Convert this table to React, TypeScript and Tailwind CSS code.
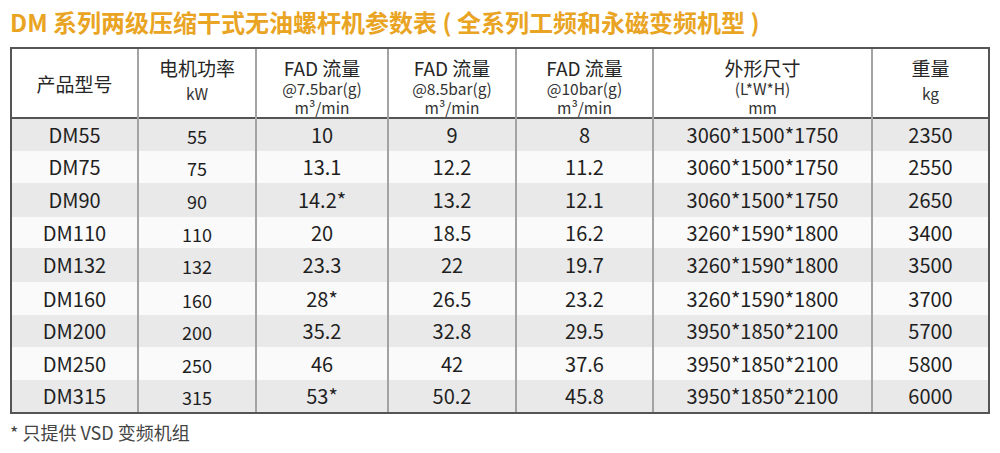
const rows = [
  ['DM55', '55', '10', '9', '8', '3060*1500*1750', '2350'],
  ['DM75', '75', '13.1', '12.2', '11.2', '3060*1500*1750', '2550'],
  ['DM90', '90', '14.2*', '13.2', '12.1', '3060*1500*1750', '2650'],
  ['DM110', '110', '20', '18.5', '16.2', '3260*1590*1800', '3400'],
  ['DM132', '132', '23.3', '22', '19.7', '3260*1590*1800', '3500'],
  ['DM160', '160', '28*', '26.5', '23.2', '3260*1590*1800', '3700'],
  ['DM200', '200', '35.2', '32.8', '29.5', '3950*1850*2100', '5700'],
  ['DM250', '250', '46', '42', '37.6', '3950*1850*2100', '5800'],
  ['DM315', '315', '53*', '50.2', '45.8', '3950*1850*2100', '6000'],
];

// row heights measured from the sheet
const heights = ['h-[33px]', 'h-[32px]', 'h-[34px]', 'h-[31px]', 'h-[34px]', 'h-[33px]', 'h-[32px]', 'h-[33px]', 'h-[32px]'];

function HeadCell({ title, lines, shift }: { title: string; lines: string[]; shift?: boolean }) {
  return (
    <th className="align-top pt-[8px] font-normal border-l-2 border-[#a3a3a3]">
      <div className="text-[19px] leading-[22px] text-[#262626]">{title}</div>
      {lines.map((l, i) => (
        <div key={i} className={`text-[15.5px] leading-[19px] text-[#333] ${shift ? 'mt-[5px]' : ''}`}>
          {l}
        </div>
      ))}
    </th>
  );
}

export default function App() {
  return (
    <div className="w-[1000px] h-[453px] bg-white px-[10px] pt-[7px] font-['Noto_Sans_CJK_SC','Noto_Sans',sans-serif]">
      <h1 className="text-[24px] leading-[30px] font-bold text-[#e9a423] mb-[10px] whitespace-nowrap">
        DM 系列两级压缩干式无油螺杆机参数表 ( 全系列工频和永磁变频机型 )
      </h1>

      <div className="border-2 border-[#555] w-[980px]">
        <table className="w-full table-fixed border-collapse">
          <colgroup>
            <col className="w-[126px]" />
            <col className="w-[118px]" />
            <col className="w-[132px]" />
            <col className="w-[128px]" />
            <col className="w-[137px]" />
            <col className="w-[219px]" />
            <col className="w-[116px]" />
          </colgroup>
          <thead>
            <tr className="h-[69px] border-b-2 border-[#555] bg-white">
              <th className="align-middle font-normal text-[19px] text-[#262626] pt-[2px]">产品型号</th>
              <HeadCell title="电机功率" lines={['kW']} shift />
              <HeadCell title="FAD 流量" lines={['@7.5bar(g)', 'm³/min']} />
              <HeadCell title="FAD 流量" lines={['@8.5bar(g)', 'm³/min']} />
              <HeadCell title="FAD 流量" lines={['@10bar(g)', 'm³/min']} />
              <HeadCell title="外形尺寸" lines={['(L*W*H)', 'mm']} />
              <HeadCell title="重量" lines={['kg']} shift />
            </tr>
          </thead>
          <tbody>
            {rows.map((r, i) => (
              <tr key={r[0]} className={`${heights[i]} ${i % 2 === 0 ? 'bg-[#e9e9e9]' : 'bg-[#fafafa]'}`}>
                {r.map((c, j) => (
                  <td
                    key={j}
                    className={`text-center p-0 text-[#1f1f1f] ${j === 1 ? 'text-[18px] pt-[2px]' : 'text-[20px]'} leading-none ${
                      j === 0 ? '' : 'border-l-2 border-[#a3a3a3]'
                    }`}
                  >
                    {c}
                  </td>
                ))}
              </tr>
            ))}
          </tbody>
        </table>
      </div>

      <p className="mt-[7px] text-[18px] leading-[22px] text-[#444]">* 只提供 VSD 变频机组</p>
    </div>
  );
}
